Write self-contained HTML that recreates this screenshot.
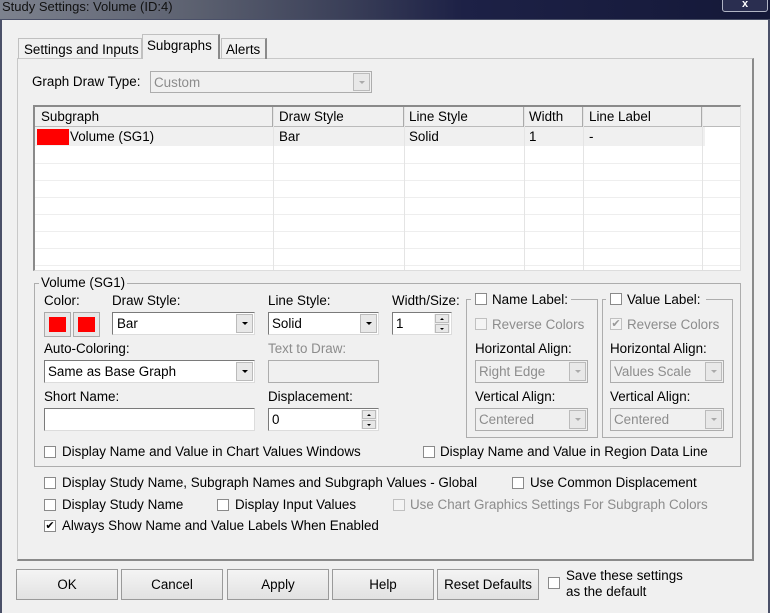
<!DOCTYPE html>
<html><head><meta charset="utf-8"><style>
*{box-sizing:border-box;margin:0;padding:0}
body{width:770px;height:613px;overflow:hidden;background:#f0f0f0;font-family:"Liberation Sans",Arial,sans-serif;font-size:13.4px;color:#000;position:relative}
.a{position:absolute;white-space:nowrap}
.title{left:0;top:0;width:770px;height:19px;background:linear-gradient(90deg,#7d828e 0,#5c6170 25%,#3a3f58 45%,#1d2146 60%,#141838 100%)}
.box{border:1px solid #adadad}
.in{background:#fff;border:1px solid #7a7a7a;border-right-color:#dcdcdc;border-bottom-color:#dcdcdc}
.dis{background:#f0f0f0;border:1px solid #adadad;color:#8c8c8c}
.dd{position:absolute;right:1px;top:1px;bottom:1px;width:17px;background:#e8e8e8;border:1px solid #bbb}
.dd:after{content:"";position:absolute;left:5px;top:7px;border-left:3px solid transparent;border-right:3px solid transparent;border-top:3px solid #000}
.dd.g:after{border-top-color:#aaa}
.sp{position:absolute;right:1px;top:1px;bottom:1px;width:16px;background:#eee}
.sp i{position:absolute;left:1px;width:14px;height:9px;border:1px solid #bbb;background:#e8e8e8}
.sp i:after{content:"";position:absolute;left:4px;top:3px;border-left:2px solid transparent;border-right:2px solid transparent}
.sp i.u{top:0}.sp i.u:after{border-bottom:2px solid #000}
.sp i.d{bottom:0}.sp i.d:after{border-top:2px solid #000}
.cb{position:absolute;width:12px;height:12px;border:1px solid #8a8a8a;background:#fff}
.cb.g{border-color:#c0c0c0;background:#f4f4f4}
.btn{position:absolute;top:569px;height:31px;border:1px solid #9a9a9a;background:linear-gradient(#f4f4f4,#e2e2e2);text-align:center;line-height:29px;font-size:13.4px}
.grey{color:#8c8c8c}
</style></head><body>
<div class="a title"></div>
<div class="a" style="left:2px;top:0;font-size:13px;color:#111;line-height:14px">Study Settings: Volume (ID:4)</div>
<div class="a" style="left:722px;top:-3px;width:46px;height:15px;border:1px solid #b0b4c4;border-radius:3px;background:#2a2e50;color:#fff;text-align:center;font-size:11px;font-weight:bold;line-height:13px">x</div>
<div class="a" style="left:0;top:19px;width:770px;height:594px;background:#f0f0f0;border-left:2px solid #4a5068;border-right:2px solid #4a5068;border-top:1px solid #4a5068"></div>

<div class="a" style="left:17px;top:58px;width:737px;height:503px;border:1px solid #c8c8c8;border-right:2px solid #8a8a8a;border-bottom:2px solid #8a8a8a;background:#f0f0f0"></div>
<div class="a" style="left:18px;top:38px;width:124px;height:21px;border:1px solid #c0c0c0;border-bottom:none;padding:3px 5px">Settings and Inputs</div>
<div class="a" style="left:142px;top:34px;width:78px;height:25px;border:1px solid #c0c0c0;border-right:2px solid #8a8a8a;border-bottom:none;background:#f0f0f0;padding:3px 4px">Subgraphs</div>
<div class="a" style="left:221px;top:38px;width:46px;height:21px;border:1px solid #c0c0c0;border-right:2px solid #8a8a8a;border-bottom:none;padding:3px 4px">Alerts</div>

<div class="a" style="left:32px;top:74px">Graph Draw Type:</div>
<div class="a dis" style="left:150px;top:71px;width:222px;height:22px;padding:3px 3px">Custom<div class="dd g"></div></div>

<div class="a" style="left:33px;top:105px;width:708px;height:166px;background:#fff;border:2px solid #8a8a8a;border-right:1px solid #ddd;border-bottom:1px solid #ddd;overflow:hidden">
 <div class="a" style="left:0;top:0;width:706px;height:20px;background:#f0f0f0;border-bottom:1px solid #bbb"></div>
 <div class="a" style="left:0;top:20px;width:670px;height:19px;background:#f0f0f0"></div>
 <div class="a" style="left:0;top:56px;width:706px;height:1px;background:#eee"></div>
 <div class="a" style="left:0;top:73px;width:706px;height:1px;background:#eee"></div>
 <div class="a" style="left:0;top:90px;width:706px;height:1px;background:#eee"></div>
 <div class="a" style="left:0;top:107px;width:706px;height:1px;background:#eee"></div>
 <div class="a" style="left:0;top:124px;width:706px;height:1px;background:#eee"></div>
 <div class="a" style="left:0;top:141px;width:706px;height:1px;background:#eee"></div>
 <div class="a" style="left:0;top:158px;width:706px;height:1px;background:#eee"></div>
 <div class="a" style="left:238px;top:0;width:1px;height:166px;background:#e4e4e4"></div>
 <div class="a" style="left:369px;top:0;width:1px;height:166px;background:#e4e4e4"></div>
 <div class="a" style="left:489px;top:0;width:1px;height:166px;background:#e4e4e4"></div>
 <div class="a" style="left:548px;top:0;width:1px;height:166px;background:#e4e4e4"></div>
 <div class="a" style="left:667px;top:0;width:1px;height:166px;background:#e4e4e4"></div>
 <div class="a" style="left:237px;top:0;width:1px;height:20px;background:#aaa"></div>
 <div class="a" style="left:368px;top:0;width:1px;height:20px;background:#aaa"></div>
 <div class="a" style="left:488px;top:0;width:1px;height:20px;background:#aaa"></div>
 <div class="a" style="left:547px;top:0;width:1px;height:20px;background:#aaa"></div>
 <div class="a" style="left:666px;top:0;width:1px;height:20px;background:#aaa"></div>
 <div class="a" style="left:6px;top:2px">Subgraph</div>
 <div class="a" style="left:244px;top:2px">Draw Style</div>
 <div class="a" style="left:374px;top:2px">Line Style</div>
 <div class="a" style="left:494px;top:2px">Width</div>
 <div class="a" style="left:554px;top:2px">Line Label</div>
 <div class="a" style="left:2px;top:22px;width:32px;height:16px;background:#f00"></div>
 <div class="a" style="left:35px;top:22px">Volume (SG1)</div>
 <div class="a" style="left:244px;top:22px">Bar</div>
 <div class="a" style="left:374px;top:22px">Solid</div>
 <div class="a" style="left:494px;top:22px">1</div>
 <div class="a" style="left:554px;top:22px">-</div>
</div>

<div class="a box" style="left:34px;top:283px;width:707px;height:184px"></div>
<div class="a" style="left:39px;top:275px;background:#f0f0f0;padding:0 2px">Volume (SG1)</div>
<div class="a" style="left:44px;top:293px">Color:</div>
<div class="a" style="left:44px;top:312px;width:27px;height:25px;border:1px solid #aaa;background:#e8e8e8"><div style="margin:4px;width:17px;height:15px;background:#f00"></div></div>
<div class="a" style="left:73px;top:312px;width:27px;height:25px;border:1px solid #aaa;background:#e8e8e8"><div style="margin:4px;width:17px;height:15px;background:#f00"></div></div>
<div class="a" style="left:112px;top:293px">Draw Style:</div>
<div class="a in" style="left:112px;top:312px;width:143px;height:23px;padding:3px 4px">Bar<div class="dd"></div></div>
<div class="a" style="left:268px;top:293px">Line Style:</div>
<div class="a in" style="left:268px;top:312px;width:111px;height:23px;padding:3px 3px">Solid<div class="dd"></div></div>
<div class="a" style="left:392px;top:293px">Width/Size:</div>
<div class="a in" style="left:392px;top:312px;width:60px;height:23px;padding:3px 3px">1<div class="sp"><i class="u"></i><i class="d"></i></div></div>
<div class="a" style="left:44px;top:341px">Auto-Coloring:</div>
<div class="a in" style="left:44px;top:360px;width:211px;height:23px;padding:3px 3px">Same as Base Graph<div class="dd"></div></div>
<div class="a grey" style="left:268px;top:341px">Text to Draw:</div>
<div class="a dis" style="left:268px;top:360px;width:111px;height:23px"></div>
<div class="a" style="left:44px;top:389px">Short Name:</div>
<div class="a in" style="left:44px;top:408px;width:211px;height:23px"></div>
<div class="a" style="left:268px;top:389px">Displacement:</div>
<div class="a in" style="left:268px;top:408px;width:111px;height:23px;padding:3px 3px">0<div class="sp"><i class="u"></i><i class="d"></i></div></div>

<div class="a box" style="left:466px;top:299px;width:132px;height:139px"></div>
<div class="a" style="left:471px;top:292px;width:100px;height:16px;background:#f0f0f0"></div>
<div class="cb" style="left:475px;top:293px"></div><div class="a" style="left:492px;top:292px">Name Label:</div>
<div class="cb g" style="left:475px;top:318px"></div><div class="a grey" style="left:492px;top:317px">Reverse Colors</div>
<div class="a" style="left:475px;top:341px">Horizontal Align:</div>
<div class="a dis" style="left:475px;top:360px;width:113px;height:23px;padding:3px 3px">Right Edge<div class="dd g"></div></div>
<div class="a" style="left:475px;top:389px">Vertical Align:</div>
<div class="a dis" style="left:475px;top:408px;width:113px;height:23px;padding:3px 3px">Centered<div class="dd g"></div></div>

<div class="a box" style="left:602px;top:299px;width:131px;height:139px"></div>
<div class="a" style="left:606px;top:292px;width:100px;height:16px;background:#f0f0f0"></div>
<div class="cb" style="left:610px;top:293px"></div><div class="a" style="left:627px;top:292px">Value Label:</div>
<div class="cb g" style="left:610px;top:318px;color:#999;font-size:11px;line-height:10px;text-align:center">✔</div><div class="a grey" style="left:627px;top:317px">Reverse Colors</div>
<div class="a" style="left:610px;top:341px">Horizontal Align:</div>
<div class="a dis" style="left:610px;top:360px;width:114px;height:23px;padding:3px 3px">Values Scale<div class="dd g"></div></div>
<div class="a" style="left:610px;top:389px">Vertical Align:</div>
<div class="a dis" style="left:610px;top:408px;width:114px;height:23px;padding:3px 3px">Centered<div class="dd g"></div></div>

<div class="cb" style="left:44px;top:446px"></div><div class="a" style="left:62px;top:444px">Display Name and Value in Chart Values Windows</div>
<div class="cb" style="left:423px;top:446px"></div><div class="a" style="left:440px;top:444px">Display Name and Value in Region Data Line</div>

<div class="cb" style="left:44px;top:477px"></div><div class="a" style="left:62px;top:475px">Display Study Name, Subgraph Names and Subgraph Values - Global</div>
<div class="cb" style="left:512px;top:477px"></div><div class="a" style="left:530px;top:475px">Use Common Displacement</div>
<div class="cb" style="left:44px;top:499px"></div><div class="a" style="left:62px;top:497px">Display Study Name</div>
<div class="cb" style="left:217px;top:499px"></div><div class="a" style="left:235px;top:497px">Display Input Values</div>
<div class="cb g" style="left:393px;top:499px"></div><div class="a grey" style="left:410px;top:497px">Use Chart Graphics Settings For Subgraph Colors</div>
<div class="cb" style="left:44px;top:520px;font-size:11px;line-height:10px;text-align:center">✔</div><div class="a" style="left:62px;top:518px">Always Show Name and Value Labels When Enabled</div>

<div class="btn" style="left:16px;width:102px">OK</div>
<div class="btn" style="left:121px;width:102px">Cancel</div>
<div class="btn" style="left:227px;width:102px">Apply</div>
<div class="btn" style="left:332px;width:102px">Help</div>
<div class="btn" style="left:437px;width:102px">Reset Defaults</div>
<div class="cb" style="left:548px;top:577px"></div>
<div class="a" style="left:566px;top:568px;line-height:16px">Save these settings<br>as the default</div>
</body></html>
